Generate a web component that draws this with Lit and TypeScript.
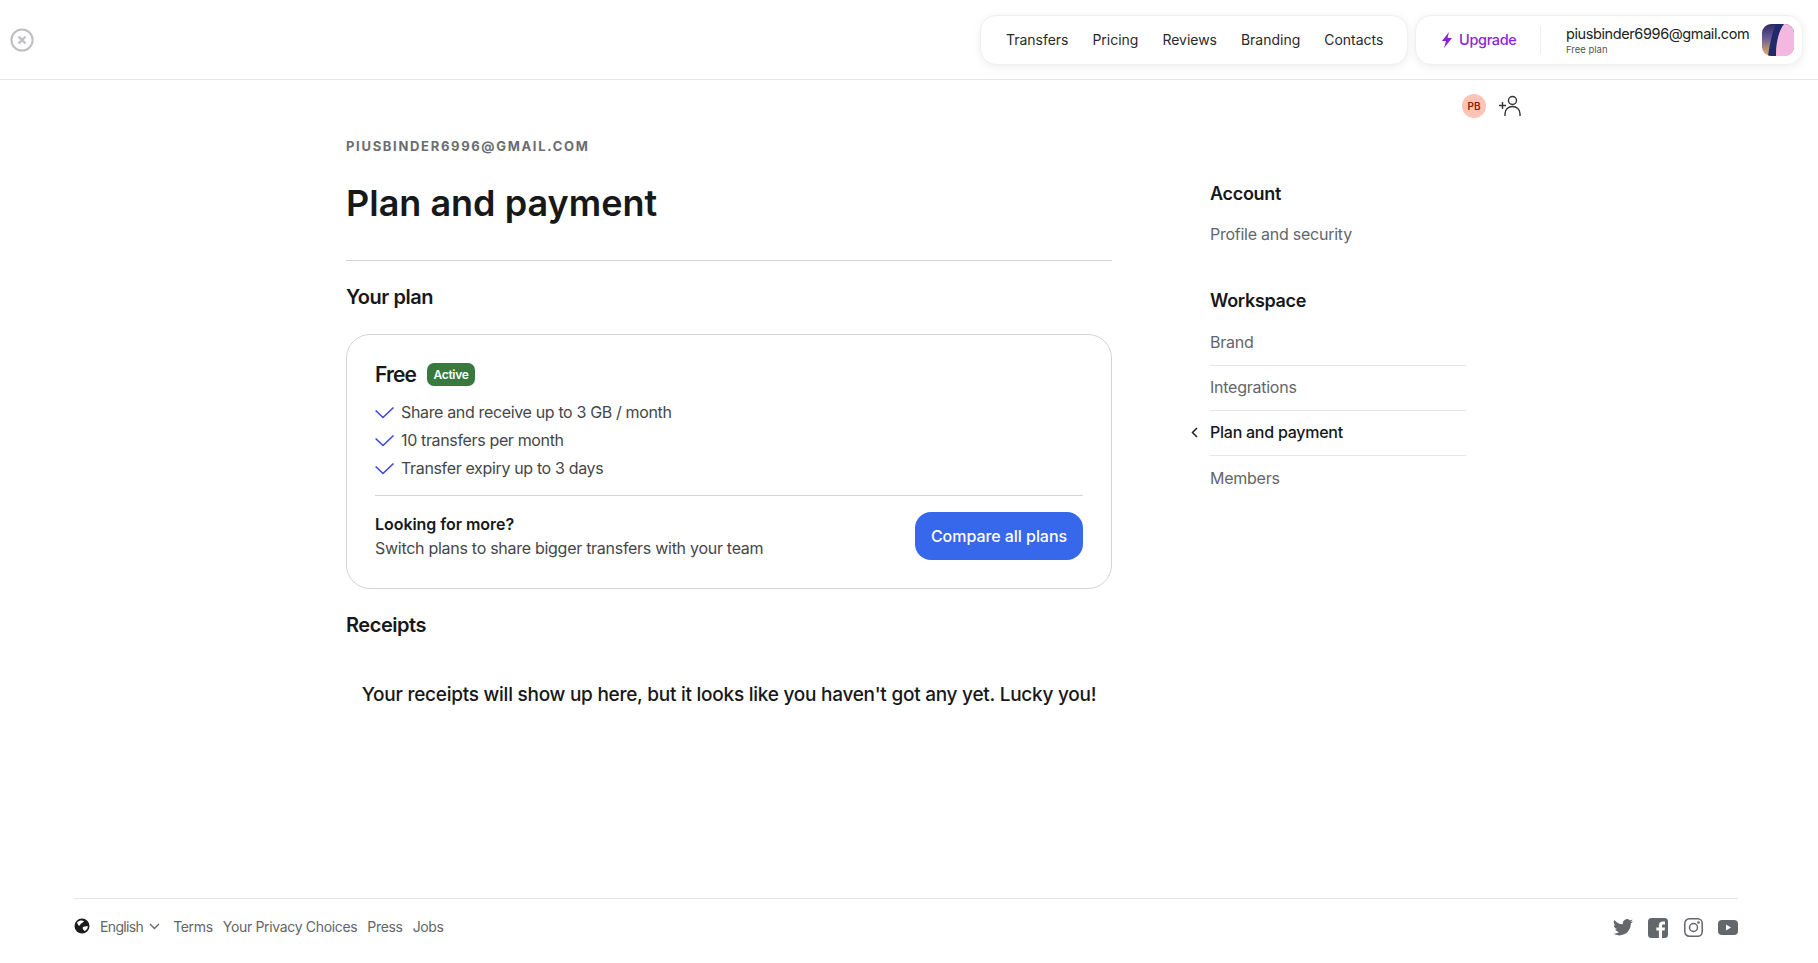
import { LitElement, html, css } from "lit";
import { customElement } from "lit/decorators.js";

const check = html`<svg class="chk" width="20" height="14" viewBox="0 0 20 14" fill="none"><path d="M.6 4.500 L8 11.500 L18.500 1.500" stroke="#3b45e0" stroke-width="1.6"/></svg>`;

@customElement("app-root")
export class AppRoot extends LitElement {
  static styles = css`
    :host { display: block; height: 963px; font-family: Inter, "Liberation Sans", sans-serif; color: #17181a; background: #fff; overflow: hidden; }
    * { box-sizing: border-box; }
    .page { height: 963px; display: flex; flex-direction: column; }
    header { height: 80px; flex: none; border-bottom: 1px solid #e6e6e6; display: flex; align-items: center; justify-content: space-between; padding: 0 15px 0 10px; }
    .close { display: flex; }
    .cards { display: flex; gap: 7px; }
    .pill { height: 50px; border: 1px solid #f0f0f0; border-radius: 16px; background: #fff; box-shadow: 0 2px 8px rgba(0,0,0,.07); display: flex; align-items: center; }
    .nav { width: 428px; padding: 0 25px; gap: 24px; font-size: 14px; letter-spacing: -.02px; color: #2a2a2a; }
    .acct { width: 388px; padding: 0 8px 0 25px; }
    .up { display: flex; align-items: center; gap: 6px; color: #8f1fd6; font-size: 14.5px; letter-spacing: -.35px; font-weight: 500; width: 84px; }
    .sep { width: 1px; height: 28px; background: #eee; margin: 0 25px 0 15px; }
    .who { flex: 1; display: flex; flex-direction: column; line-height: 1; padding-top: 1px; }
    .mail { font-size: 14.5px; letter-spacing: -.4px; color: #222; line-height: 17px; }
    .tier { font-size: 9.5px; color: #555; line-height: 12px; margin-top: 2px; }
    .ava { width: 32px; height: 32px; border-radius: 9px; background: linear-gradient(180deg,#2f2a63 0%,#6a5d96 45%,#e6b25d 100%); overflow: hidden; display: flex; }
    .ava svg { display: block; }
    .invite { height: 38px; flex: none; display: flex; justify-content: flex-end; align-items: flex-end; gap: 12px; width: 1522px; }
    .pb { width: 24px; height: 24px; border-radius: 50%; background: #fdc4b6; color: #8f1d0c; font-size: 10px; font-weight: 600; display: flex; align-items: center; justify-content: center; }
    main { flex: 1; display: flex; padding: 0 0 0 346px; align-items: flex-start; }
    .content { width: 766px; flex: none; }
    .eyebrow { margin-top: 18px; font-size: 13px; line-height: 20px; letter-spacing: 1.68px; font-weight: 700; color: #6a6d70; }
    h1 { margin: 25px 0 0; font-size: 36px; line-height: 44px; font-weight: 600; letter-spacing: 0; color: #17181a; }
    .rule { height: 1px; background: #d4d4d8; margin-top: 35px; }
    h2 { margin: 0; font-size: 20px; line-height: 28px; font-weight: 600; letter-spacing: -.45px; }
    .yp { margin-top: 22px; }
    .plan { margin-top: 23px; height: 255px; border: 1px solid #d4d4d8; border-radius: 24px; padding: 25px 28px 0; display: flex; flex-direction: column; }
    .pt { display: flex; align-items: center; gap: 11px; height: 28px; }
    .pt b { font-size: 21px; font-weight: 600; letter-spacing: -.9px; }
    .badge { background: #37793f; color: #fff; font-size: 12px; font-weight: 600; letter-spacing: -.3px; height: 23px; width: 48px; border-radius: 7px; display: flex; align-items: center; justify-content: center; }
    ul { list-style: none; margin: 10px 0 0; padding: 0; }
    li { display: flex; align-items: center; gap: 6px; height: 28px; font-size: 16px; letter-spacing: -.35px; color: #45474a; }
    .chk { flex: none; margin-top: 1px; }
    .more { border-top: 1px solid #d4d4d8; margin-top: 13px; padding-top: 16px; display: flex; justify-content: space-between; }
    .mt { display: flex; flex-direction: column; font-size: 16px; line-height: 24px; letter-spacing: -.28px; color: #45474a; }
    .mt b { font-weight: 600; color: #17181a; letter-spacing: -.05px; }
    .btn { width: 168px; height: 48px; border-radius: 16px; background: #3767ea; color: #fff; font-size: 16px; font-weight: 500; letter-spacing: -.05px; display: flex; align-items: center; justify-content: center; }
    .rc { margin-top: 22px; }
    .none { margin-top: 42px; text-align: center; font-size: 19px; line-height: 28px; font-weight: 500; letter-spacing: -.25px; color: #17181a; }
    aside { width: 256px; margin-left: 98px; padding-top: 63px; flex: none; }
    h3 { margin: 0; font-size: 18px; line-height: 26px; font-weight: 600; letter-spacing: -.3px; }
    .links { margin-top: 5px; margin-bottom: 31px; }
    .links.w { margin-top: 7px; }
    .lk { height: 45px; padding-bottom: 2px; display: flex; align-items: center; font-size: 16px; letter-spacing: -.25px; color: #63666a; border-bottom: 1px solid #e4e6ea; position: relative; }
    .lk:last-child { border-bottom: 0; }
    .lk.on { color: #17181a; font-weight: 500; }
    .lk.on svg { position: absolute; left: -19px; top: 16px; }
    footer { flex: none; margin: 0 80px 0 74px; height: 65px; border-top: 1px solid #e4e4e4; display: flex; align-items: center; justify-content: space-between; padding-bottom: 10px; font-size: 14px; letter-spacing: -.33px; color: #63666a; }
    .fl { display: flex; align-items: center; gap: 10px; }
    .lang { display: flex; align-items: center; gap: 6px; margin: 0 3px 0 0; letter-spacing: -.65px; }
    .soc { display: flex; align-items: center; gap: 15.5px; margin-top: 3px; }
  `;

  render() {
    return html`<div class="page">
      <header>
        <div class="close"><svg width="24" height="24" viewBox="0 0 24 24" fill="none" stroke="#bcbec2"><circle cx="12" cy="12" r="10.6" stroke-width="2"/><path d="M8.500 8.500l7 7M15.500 8.500l-7 7" stroke-width="2.2"/></svg></div>
        <div class="cards">
          <div class="pill nav"><span>Transfers</span><span>Pricing</span><span>Reviews</span><span>Branding</span><span>Contacts</span></div>
          <div class="pill acct">
            <div class="up"><svg width="12" height="16" viewBox="0 0 12 16" fill="#8f1fd6"><path d="M8 0 1 9h4l-2 7 8-10H6.500z"/></svg>Upgrade</div>
            <div class="sep"></div>
            <div class="who"><span class="mail">piusbinder6996@gmail.com</span><span class="tier">Free plan</span></div>
            <div class="ava"><svg width="32" height="32" viewBox="0 0 32 32"><path d="M6 32C8 20 10 8 14 0H22C16 8 14 20 14 32z" fill="#1f2a6b"/><path d="M14 32C14 20 16 8 22 0H32V32z" fill="#f4b8e0"/></svg></div>
          </div>
        </div>
      </header>
      <div class="invite">
        <div class="pb">PB</div>
        <svg width="24" height="24" viewBox="0 0 24 24" fill="none" stroke="#333" stroke-width="1.4"><circle cx="14.500" cy="6.500" r="4"/><path d="M7 22v-2.500a7.500 7 0 0 1 15 0V22M1 11.500h7M4.500 8v7"/></svg>
      </div>
      <main>
        <div class="content">
          <div class="eyebrow">PIUSBINDER6996@GMAIL.COM</div>
          <h1>Plan and payment</h1>
          <div class="rule"></div>
          <h2 class="yp">Your plan</h2>
          <div class="plan">
            <div class="pt"><b>Free</b><span class="badge">Active</span></div>
            <ul>
              <li>${check}Share and receive up to 3 GB / month</li>
              <li>${check}10 transfers per month</li>
              <li>${check}Transfer expiry up to 3 days</li>
            </ul>
            <div class="more">
              <div class="mt"><b>Looking for more?</b><span>Switch plans to share bigger transfers with your team</span></div>
              <div class="btn">Compare all plans</div>
            </div>
          </div>
          <h2 class="rc">Receipts</h2>
          <div class="none">Your receipts will show up here, but it looks like you haven't got any yet. Lucky you!</div>
        </div>
        <aside>
          <h3>Account</h3>
          <div class="links"><div class="lk">Profile and security</div></div>
          <h3>Workspace</h3>
          <div class="links w">
            <div class="lk">Brand</div>
            <div class="lk">Integrations</div>
            <div class="lk on"><svg width="7" height="11" viewBox="0 0 7 11" fill="none" stroke="#222" stroke-width="1.500"><path d="M6 1 1.500 5.500 6 10"/></svg>Plan and payment</div>
            <div class="lk">Members</div>
          </div>
        </aside>
      </main>
      <footer>
        <div class="fl">
          <svg width="16" height="16" viewBox="0 0 16 16"><circle cx="8" cy="8" r="7.500" fill="#1b1b1b"/><path d="M3 4.500C5 2 8 2 10 3c-1 2-3 2-4 4S4 7 3 4.500zM9 9c2-1 4-1 5-.5-.5 2.500-2 4-3.500 4.500C10 12 8 11 9 9z" fill="#fff"/></svg>
          <div class="lang">English<svg width="11" height="7" viewBox="0 0 11 7" fill="none" stroke="#63666a" stroke-width="1.300"><path d="M1 1l4.500 4.500L10 1"/></svg></div>
          <span>Terms</span><span>Your Privacy Choices</span><span>Press</span><span>Jobs</span>
        </div>
        <div class="soc">
          <svg width="20" height="17" viewBox="0 0 24 20" fill="#63666a"><path d="M24 2.400a10 10 0 0 1-2.800.8 5 5 0 0 0 2.200-2.700 10 10 0 0 1-3.100 1.200 4.900 4.900 0 0 0-8.400 4.500A14 14 0 0 1 1.700.9a4.900 4.900 0 0 0 1.500 6.600 5 5 0 0 1-2.200-.6 4.900 4.900 0 0 0 3.900 4.900 5 5 0 0 1-2.200.1 4.900 4.900 0 0 0 4.600 3.400A10 10 0 0 1 0 17.300 14 14 0 0 0 7.500 19.500c9.100 0 14.200-7.700 13.900-14.500A10 10 0 0 0 24 2.400z"/></svg>
          <svg width="20" height="20" viewBox="0 0 20 20"><path fill="#63666a" d="M3.500 0h13A3.500 3.500 0 0 1 20 3.500v13a3.500 3.500 0 0 1-3.500 3.500H14v-7.500h2.600l.4-3H14V7.800c0-.9.300-1.400 1.500-1.400H17V3.700c-.3 0-1.200-.1-2.300-.1-2.300 0-3.800 1.400-3.800 3.900v2H8.300v3h2.600V20H3.500A3.500 3.500 0 0 1 0 16.500v-13A3.500 3.500 0 0 1 3.500 0z"/></svg>
          <svg width="19" height="19" viewBox="0 0 19 19" fill="none" stroke="#63666a" stroke-width="1.500"><rect x=".8" y=".8" width="17.400" height="17.400" rx="4.500"/><circle cx="9.500" cy="9.500" r="4"/><circle cx="14.500" cy="4.500" r=".6" fill="#63666a"/></svg>
          <svg width="20" height="15" viewBox="0 0 20 15"><rect width="20" height="15" rx="4" fill="#63666a"/><path d="M8 4.500v6l5-3z" fill="#fff"/></svg>
        </div>
      </footer>
    </div>`;
  }
}
